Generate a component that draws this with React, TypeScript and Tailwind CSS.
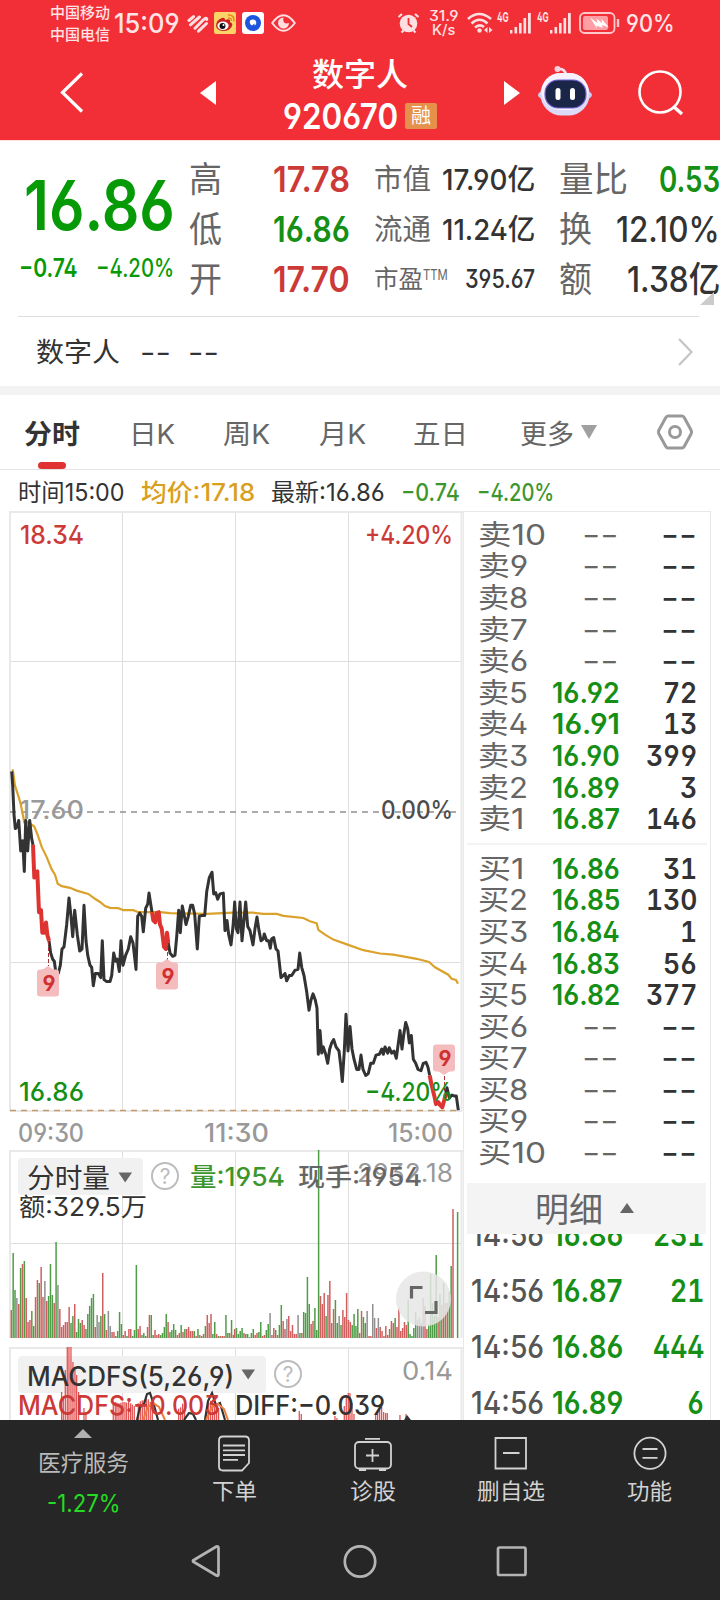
import { useLayoutEffect, useRef, useState, type ReactNode } from "react";

interface TProps {
  w: number;
  className?: string;
  children: ReactNode;
}

// Text squeezed or stretched horizontally so it fills exactly w pixels
function T({ w, className = "", children }: TProps) {
  const ref = useRef<HTMLSpanElement>(null);
  const [scale, setScale] = useState(1);
  useLayoutEffect(() => {
    if (ref.current) setScale(w / ref.current.offsetWidth);
  }, [w]);
  return (
    <span className={`block shrink-0 whitespace-nowrap leading-none ${className}`} style={{ width: w }}>
      <span ref={ref} className="inline-block origin-left" style={{ transform: `scaleX(${scale})` }}>
        {children}
      </span>
    </span>
  );
}

function Signal() {
  return (
    <svg className="ml-[1px] h-[21px] w-[21px] shrink-0" viewBox="0 0 21 21" fill="#ffdfe1">
      <rect x="0" y="17" width="2.4" height="3.5" />
      <rect x="4.5" y="14" width="2.6" height="6.5" />
      <rect x="9" y="10" width="2.6" height="10.5" />
      <rect x="13.5" y="5" width="2.6" height="15.5" />
      <rect x="18" y="0" width="2.8" height="20.5" />
    </svg>
  );
}

function StatusBar() {
  return (
    <div className="flex h-[46px] items-center pl-[50px] font-medium text-[#ffe3e5]">
      <div className="flex flex-col gap-[7px]">
        <T w={60} className="text-[15px]">中国移动</T>
        <T w={60} className="text-[15px]">中国电信</T>
      </div>
      <T w={66} className="ml-[4px] text-[27px]">15:09</T>
      <svg className="ml-[6px] h-[19px] w-[23px]" viewBox="0 0 23 19" fill="none" stroke="#ffdfe1" strokeWidth="3" strokeLinecap="round">
        <path d="M3 6.500 L7.500 2.600 M4.500 10.800 L13.500 3 M9 14.200 L17.200 6 Q20.500 2.800 20.800 5.500 M12.500 17.200 L20.500 9.500" />
      </svg>
      <svg className="ml-[5px] h-[22px] w-[22px]" viewBox="0 0 22 22">
        <rect width="22" height="22" rx="2" fill="#fbd468" />
        <path d="M2 14 Q2 8 8 6 Q11 5 11 8 Q17 6 16 10 Q19 11 18 14 Q16 19 9 19 Q3 18.500 2 14" fill="#c9201f" />
        <ellipse cx="9" cy="13.800" rx="5.600" ry="4.200" fill="#fff" />
        <circle cx="8.500" cy="14" r="3" fill="#111" />
        <circle cx="9.500" cy="13" r="1" fill="#fff" />
        <path d="M14 6 Q17.500 5.500 17.500 9 M14 3 Q20.500 2.500 20 9.500" fill="none" stroke="#e88a1c" strokeWidth="1.500" />
      </svg>
      <svg className="ml-[6px] h-[22px] w-[22px]" viewBox="0 0 22 22">
        <rect width="22" height="22" rx="3" fill="#fff" />
        <circle cx="11" cy="11" r="8" fill="#1d55dd" />
        <path d="M8 8.500 Q11 6.500 13.500 8.500 Q15.500 12 12.500 13.500 V11.500 L10 13.500 Q7 12 8 8.500" fill="#fff" />
      </svg>
      <svg className="ml-[7px] h-[18px] w-[25px]" viewBox="0 0 25 18" fill="none" stroke="#ffdfe1" strokeWidth="2">
        <path d="M1.200 9 Q12.500 -6.500 23.800 9 Q12.500 24.500 1.200 9 Z" />
        <path d="M12.500 3.500 A5.500 5.500 0 1 0 18 9 Q15 10 13 8.500 Q11.500 6.500 12.500 3.500" fill="#ffdfe1" stroke="none" />
      </svg>
      <svg className="ml-[101px] h-[22px] w-[23px]" viewBox="0 0 23 22">
        <circle cx="11.500" cy="11.500" r="8.800" fill="#ffdfe1" />
        <path d="M1.500 5 L5 2 M21.500 5 L18 2 M4.500 20.500 L6.500 18.500 M18.500 20.500 L16.500 18.500" stroke="#ffdfe1" strokeWidth="2.200" />
        <path d="M11.500 6 V12 L15 15" fill="none" stroke="#f22f37" strokeWidth="1.800" />
      </svg>
      <div className="ml-[9px] flex flex-col items-center">
        <T w={29} className="text-[14px]">31.9</T>
        <T w={23} className="text-[14px]">K/s</T>
      </div>
      <svg className="ml-[9px] h-[22px] w-[26px]" viewBox="0 0 26 22" fill="none" stroke="#ffdfe1" strokeWidth="2.600">
        <path d="M1 7 Q12 -3 24 7 M4.500 11.500 Q12.500 4 20.500 11.500 M8 15.500 Q12.500 11.500 17 15" />
        <circle cx="12.500" cy="18.500" r="2.200" fill="#ffdfe1" stroke="none" />
        <path d="M20.500 15 V21 L17 18 Z M22 15 V21 L25.500 18 Z" fill="#ffdfe1" stroke="none" />
      </svg>
      <T w={12} className="ml-[4px] mb-[12px] text-[13px] font-bold">4G</T>
      <Signal />
      <T w={12} className="ml-[6px] mb-[12px] text-[13px] font-bold">4G</T>
      <Signal />
      <svg className="ml-[8px] h-[22px] w-[41px]" viewBox="0 0 41 22">
        <rect x="1" y="1" width="34.500" height="20" rx="4.500" fill="none" stroke="#ffc9cc" strokeWidth="1.800" />
        <rect x="4" y="4" width="25" height="14" rx="2" fill="#ff9ea4" />
        <path d="M11 5.500 L18.500 11 L17.500 6.500 L23 11 L22.500 7 L30 15.500 L23 13 L23.500 16 L17.500 13.500 L18 16.500 Z" fill="#fff" />
        <path d="M39 7 V15" stroke="#ffc9cc" strokeWidth="2.400" />
      </svg>
      <T w={49} className="ml-[6px] mt-[2px] text-[24px]">90%</T>
    </div>
  );
}

function Header() {
  return (
    <div className="flex h-[94px] items-center pl-[60px] text-white">
      <svg className="h-[42px] w-[25px]" viewBox="0 0 25 42" fill="none" stroke="#fff" strokeWidth="3.200">
        <path d="M22 1.500 L2.500 20.500 L22 39.500" />
      </svg>
      <svg className="ml-[115px] h-[24px] w-[16px]" viewBox="0 0 16 24" fill="#fff">
        <path d="M0 12 L16 0 V24 Z" />
      </svg>
      <div className="ml-[66px] flex w-[158px] flex-col pt-[7px]">
        <T w={96} className="ml-[30px] text-[32px] font-medium">数字人</T>
        <div className="mt-[7px] flex h-[36px] items-center">
          <T w={115} className="ml-[1px] text-[36px] font-semibold">920670</T>
          <div className="ml-[7px] flex h-[26px] w-[32px] items-center justify-center rounded-[2px] bg-[#e6914b] text-[20px] leading-none">融</div>
        </div>
      </div>
      <svg className="ml-[64px] h-[24px] w-[16px]" viewBox="0 0 16 24" fill="#fff">
        <path d="M16 12 L0 0 V24 Z" />
      </svg>
      <svg className="ml-[18px] mb-[6px] h-[51px] w-[54px]" viewBox="0 0 54 51">
        <ellipse cx="27" cy="30" rx="27" ry="8" fill="#c9cdf5" />
        <path d="M19 4 Q27 3 28 10" fill="none" stroke="#f3dfee" strokeWidth="2.500" />
        <circle cx="19.500" cy="4" r="3" fill="#f6d3dc" />
        <rect x="2.500" y="8" width="49" height="42.500" rx="21" fill="#dcdaf8" />
        <rect x="3.500" y="8" width="47" height="37" rx="18.500" fill="#f6f1fa" />
        <rect x="7" y="15" width="41" height="28" rx="13" fill="#1b2547" stroke="#7263d6" strokeWidth="1.200" />
        <rect x="17.500" y="23" width="5" height="12" rx="2.500" fill="#fff" />
        <rect x="32" y="23" width="5" height="12" rx="2.500" fill="#fff" />
      </svg>
      <svg className="ml-[46px] h-[46px] w-[46px]" viewBox="0 0 46 46" fill="none" stroke="#fff" strokeWidth="2.600">
        <circle cx="22" cy="22" r="20.500" />
        <path d="M36 37 L44 44" strokeWidth="3.400" />
      </svg>
    </div>
  );
}

function Quote() {
  return (
    <div className="relative flex h-[176px] border-t border-[#ffdcde]">
      <div className="flex w-[189px] flex-col pt-[30px] text-[#079a07]">
        <T w={151} className="ml-[24px] text-[69px] font-semibold">16.86</T>
        <div className="mt-[16px] flex">
          <T w={59} className="ml-[19px] text-[25px] font-semibold">−0.74</T>
          <T w={78} className="ml-[18px] text-[25px] font-medium">−4.20%</T>
        </div>
      </div>
      <div className="flex w-[186px] flex-col pt-[13px] text-[35px] text-[#666] [&>div]:flex [&>div]:h-[50px] [&>div]:items-center">
        <div><T w={33}>高</T><T w={77} className="ml-[51px] font-semibold text-[#cc3a38]">17.78</T></div>
        <div><T w={33}>低</T><T w={77} className="ml-[51px] font-semibold text-[#158f15]">16.86</T></div>
        <div><T w={33}>开</T><T w={77} className="ml-[51px] font-semibold text-[#cc3a38]">17.70</T></div>
      </div>
      <div className="flex w-[185px] flex-col pt-[13px] text-[29px] text-[#666] [&>div]:flex [&>div]:h-[50px] [&>div]:items-center">
        <div><T w={57}>市值</T><T w={93} className="ml-[11px] font-medium text-[#333]">17.90亿</T></div>
        <div><T w={57}>流通</T><T w={93} className="ml-[11px] font-medium text-[#333]">11.24亿</T></div>
        <div>
          <T w={49} className="text-[25px]">市盈</T>
          <T w={25} className="mb-[9px] text-[14px]">TTM</T>
          <T w={70} className="ml-[17px] text-[25px] font-medium text-[#333]">395.67</T>
        </div>
      </div>
      <div className="flex flex-col pt-[13px] text-[35px] text-[#666] [&>div]:flex [&>div]:h-[50px] [&>div]:items-center">
        <div><T w={69}>量比</T><T w={61} className="ml-[31px] font-semibold text-[#158f15]">0.53</T></div>
        <div><T w={33}>换</T><T w={104} className="ml-[24px] font-medium text-[#333]">12.10%</T></div>
        <div><T w={33}>额</T><T w={93} className="ml-[35px] font-medium text-[#333]">1.38亿</T></div>
      </div>
      <svg className="absolute left-[700px] top-[151px] h-[13px] w-[14px]" viewBox="0 0 14 13" fill="#ccc">
        <path d="M14 0 V13 H0 Z" />
      </svg>
    </div>
  );
}

function Tabs() {
  return (
    <div className="flex h-[75px] items-center border-b border-[#e4e4e4] pl-[24px] pt-[4px] text-[27px] text-[#666]">
      <div className="relative">
        <T w={56} className="font-bold text-[#333]">分时</T>
        <div className="absolute left-[14px] top-[41px] h-[7px] w-[28px] rounded-full bg-[#e03232]" />
      </div>
      <T w={46} className="ml-[49px]">日K</T>
      <T w={47} className="ml-[48px]">周K</T>
      <T w={47} className="ml-[49px]">月K</T>
      <T w={55} className="ml-[47px]">五日</T>
      <T w={54} className="ml-[52px]">更多</T>
      <svg className="ml-[7px] mb-[4px] h-[14px] w-[16px]" viewBox="0 0 16 14" fill="#a0a0a0">
        <path d="M0 0 H16 L8 14 Z" />
      </svg>
      <svg className="ml-[60px] mb-[4px] h-[36px] w-[36px]" viewBox="0 0 36 36" fill="none" stroke="#999" strokeWidth="3">
        <path d="M11 2 H25 Q26.500 2 27.500 4 L34 16 Q35 18 34 20 L27.500 32 Q26.500 34 25 34 H11 Q9.500 34 8.500 32 L2 20 Q1 18 2 16 L8.500 4 Q9.500 2 11 2 Z" />
        <circle cx="18" cy="18" r="5.500" />
      </svg>
    </div>
  );
}

function Summary() {
  return (
    <div className="flex h-[41px] items-center pl-[18px] pt-[5px] text-[24px] text-[#333]">
      <T w={107}>时间15:00</T>
      <T w={114} className="ml-[16px] font-medium text-[#d9a020]">均价:17.18</T>
      <T w={114} className="ml-[16px]">最新:16.86</T>
      <T w={59} className="ml-[16px] font-medium text-[#3c962c]">−0.74</T>
      <T w={77} className="ml-[17px] font-medium text-[#3c962c]">−4.20%</T>
    </div>
  );
}

// Samples are stored on a finer grid than the screen: 3 steps per px across, 2.45 down
const toPoints = (raw: string) =>
  raw
    .split(" ")
    .map((pair) => {
      const [x, y] = pair.split(",").map(Number);
      return `${(x / 3).toFixed(1)},${(y / 2.45 - 11).toFixed(1)}`;
    })
    .join(" ");

const PRICE = [
  "35,665 38,700 42,770 46,805 52,800 56,785 62,860 68,835 73,910 77,785 83,860 89,785 95,830 99,845",
  "147,1080 152,1110 158,1125 163,1130 168,1160 175,1160 181,1140 186,1100 192,1095 200,1040 207,975 213,1020 218,1070 224,1005 232,1065 239,1105 246,1100 252,993 258,1080 263,1115 270,1140 275,1145 280,1190 286,1160 295,1160 302,1170 307,1080 312,1175 320,1180 330,1180 335,1165 341,1110 347,1130 352,1125 358,1155 363,1080 369,1140 377,1115 385,1100 392,1070 399,1085 408,1150 413,1020 419,1012 425,1020 430,1058 437,1000 443,990 447,963 452,990 456,1010",
  "505,1085 510,1110 518,1118 525,1115 530,1070 536,1005 541,1060 547,995 552,1015 558,1040 565,1020 572,993 578,993 584,1015 592,1100 598,1020 606,1018 614,1018 620,960 628,925 636,912 641,965 647,962 653,978 660,965 670,963 675,1055 681,1030 686,1065 693,1090 699,1045 704,985 709,1050 714,1060 720,985 726,1080 737,985 743,1045 750,1055 759,1090 765,1050 771,1022 777,1055 783,1080 790,1075 793,1063 800,1080 806,1080 811,1098 815,1075 821,1072 828,1100 834,1105 843,1170 850,1165 855,1160 860,1178 868,1165 875,1165 885,1152 894,1150 899,1110 905,1145 912,1165 920,1205 927,1250 933,1225 939,1210 946,1225 951,1245 955,1358 960,1300 965,1355 970,1340 977,1358 983,1380 989,1345 995,1330 1001,1322 1008,1340 1017,1350 1022,1385 1027,1425 1033,1350 1038,1260 1044,1350 1050,1290 1056,1345 1062,1370 1070,1395 1077,1395 1083,1360 1089,1395 1097,1410 1105,1405 1112,1380 1120,1380 1128,1360 1138,1358 1145,1345 1150,1358 1155,1340 1163,1355 1168,1342 1175,1355 1182,1350 1189,1368 1200,1300 1206,1345 1211,1310 1217,1280 1223,1295 1228,1330 1234,1312 1240,1370 1247,1380 1254,1395 1263,1398 1270,1380 1278,1378 1284,1390 1289,1410",
  "1337,1455 1341,1440 1348,1465 1356,1458 1362,1460 1369,1460 1375,1495",
];

const PRICE_RED = [
  "99,845 103,925 108,912 112,910 117,1010 123,1005 127,1060 133,1060 138,1035 142,1065 147,1080",
  "456,1010 460,1030 466,1035 470,1012 476,1010 480,1040 485,1050 492,1095 498,1100 501,1060 505,1085",
  "1289,1410 1294,1430 1303,1460 1308,1480 1315,1475 1320,1482 1327,1488 1333,1470 1337,1455",
];

const AVERAGE =
  "38,660 45,700 55,725 62,745 73,790 85,790 103,800 115,825 125,850 140,875 155,905 165,918 173,940 185,946 210,950 230,957 265,965 285,977 300,985 315,995 330,999 355,1000 370,1005 400,1005 415,1010 480,1010 510,1012 620,1014 700,1011 760,1011 790,1014 830,1014 850,1019 910,1024 930,1032 950,1037 955,1053 975,1065 1000,1077 1045,1090 1090,1103 1140,1111 1180,1114 1250,1124 1287,1132 1305,1145 1345,1163 1355,1173 1368,1176 1374,1185";

interface LabelProps {
  x: number;
  y: number;
  w: number;
  fill: string;
  size?: number;
  weight?: number;
  children: string;
}

// y is the vertical centre of the digits
function Label({ x, y, w, fill, size = 25, weight = 500, children }: LabelProps) {
  return (
    <text x={x} y={y + size * 0.36} fill={fill} fontSize={size} fontWeight={weight} textLength={w} lengthAdjust="spacingAndGlyphs">
      {children}
    </text>
  );
}

function Nine({ x, y, down = false }: { x: number; y: number; down?: boolean }) {
  return (
    <g>
      <rect x={x - 11} y={y - 13.5} width="22" height="27" rx="3" fill="#f5bcbe" />
      <path d={down ? `M${x - 6} ${y + 13} L${x} ${y + 17} L${x + 6} ${y + 13}` : `M${x - 6} ${y - 13} L${x} ${y - 17} L${x + 6} ${y - 13}`} fill="#f5bcbe" />
      <Label x={x - 5.5} y={y} w={13} size={22} weight={700} fill="#d03030">9</Label>
    </g>
  );
}

function PriceChart() {
  return (
    <svg className="h-[639px] w-[463px]" viewBox="0 0 463 639" fill="none">
      <g stroke="#dedede" strokeWidth="1">
        <path d="M10 150.500 H462 M10 451.500 H462 M122.500 1 V600 M235.500 1 V600 M348.500 1 V600" />
        <path d="M9 1 H463 M10 1 V600 M461.500 1 V600 M10 600 H462" stroke="#e9e9e9" strokeWidth="2" />
      </g>
      <Label x={19} y={299} w={65} fill="#999">17.60</Label>
      <path d="M10 301 H460" stroke="#909090" strokeWidth="1.500" strokeDasharray="6 5" />
      <polyline points={toPoints(AVERAGE)} stroke="#dba22b" strokeWidth="2.200" />
      {PRICE.map((p) => (
        <polyline key={p} points={toPoints(p)} stroke="#333" strokeWidth="3" strokeLinejoin="round" />
      ))}
      {PRICE_RED.map((p) => (
        <polyline key={p} points={toPoints(p)} stroke="#dd3432" strokeWidth="4" strokeLinejoin="round" />
      ))}
      <path d="M10 599.500 H460" stroke="#c39a6b" strokeWidth="1.600" strokeDasharray="6 5" />
      <path d="M48.500 430 V455 M167.500 435 V450 M444.500 565 V580" stroke="#a33" strokeWidth="1" strokeDasharray="4 2" />
      <Nine x={48} y={472} />
      <Nine x={167} y={465} />
      <Nine x={444} y={547} down />
      <Label x={20} y={23.5} w={64} fill="#cc3a38">18.34</Label>
      <Label x={365} y={23.5} w={88} fill="#cc3a38">+4.20%</Label>
      <Label x={381} y={299} w={72} fill="#4d4d4d">0.00%</Label>
      <Label x={19} y={580.5} w={65} fill="#158f15">16.86</Label>
      <Label x={365} y={580.5} w={88} fill="#158f15">−4.20%</Label>
      <Label x={18} y={621.5} w={66} fill="#999">09:30</Label>
      <Label x={204} y={621.5} w={65} fill="#999">11:30</Label>
      <Label x={388} y={621.5} w={65} fill="#999">15:00</Label>
    </svg>
  );
}

// r = up, g = down, k = unchanged, followed by the bar height; from is in thirds of a px
const VOLUME = [
  {
    from: 34,
    bars: "r28 g85 g48 k40 r34 g70 r74 g77 r40 r16 r18 g27 g12 r41 r58 g55 r71 r41 k57 r37 g42 g74 g43 r35 g96 k53 r29 r11 r13 r16 r16 r31 g15 g22 r34 g6 g19 g15 r18 r13 g9 g24 g32 g40 g44 r11 k23 k16 g22 r65 g24 r8 k27 k12 r6 r6 g2 g7 g26 g14 r3 r7 g2 r9 r9 g2 g8 g73 r9 r12 g3 g5 g2 r11 r23 g23 g3 r8 r3 r4 g3 g5 g11 g24 r16 g6 g8 g14 g8 r3 r5 g13 r6 g9 r9 r11 r7 r7 g7 r2 g9 r3 g2 r4 g12 r23 r15 r24 g4 g16 r4 g2 r2 r2 r2 g23 g5 r5 g18 r3",
  },
  {
    from: 704,
    bars: "r9 g10 g4 g7 g10 r5 g4 g4 r1 g5 g9 r3 r5 g6 g16 r2 r3 g8 g14 k25 r3 r10 g8 r3 g13 g33 r17 r9 k19 r22 r7 r13 r4 r4 k23 g5 r5 g26 g25 g61 g34 r14 r17 g30 g8 g189 r42 r34 r45 g22 r43 r57 r15 r29 g38 g15 k22 g13 r28 r21 r45 r18 r16 g13 g24 g12 g29 r5 r27 g21 g15 k27 r2 r2 k34 k20 r10 k20 r11 r7 r2 r12 r3 g9 r17 r15 g20 r11 r30 r7 r10 r16 r13 g38 g4 g2 g10 g26 k18 k20 k15 k40 r32 r9 g14 g64 g35 g22 g83 r21 g44 r33 g55 r35 r35 g46 g72 r129",
  },
  { from: 1373, bars: "g126" },
];

const BAR_FILL: Record<string, string> = { r: "#d06060", g: "#4f9d47", k: "#8f8f8f" };

function Help({ cx, cy }: { cx: number; cy: number }) {
  return (
    <g>
      <circle cx={cx} cy={cy} r="13" stroke="#bdbdbd" strokeWidth="2" />
      <text x={cx} y={cy + 7.5} textAnchor="middle" fontSize="21" fill="#bdbdbd">?</text>
    </g>
  );
}

function VolumeChart() {
  return (
    <svg className="h-[197px] w-[463px]" viewBox="0 0 463 197" fill="none">
      <path d="M10 93.500 H462 M122.500 1 V188 M235.500 1 V188 M348.500 1 V188" stroke="#dedede" />
      <path d="M9 1 H463 M10 0 V188 M461.500 0 V188" stroke="#e9e9e9" strokeWidth="2" />
      {VOLUME.map(({ from, bars }) =>
        bars.split(" ").map((bar, i) => {
          const height = Number(bar.slice(1));
          return <rect key={`${from}-${i}`} x={(from + i * 5.6) / 3 - 0.8} y={188 - height} width="1.500" height={height} fill={BAR_FILL[bar[0]]} />;
        })
      )}
      <rect x="18" y="8" width="125" height="37" rx="4" fill="#f1f1f1" />
      <Label x={27} y={28} w={83} size={27} weight={400} fill="#333">分时量</Label>
      <path d="M118.500 22.500 H132 L125.200 32.500 Z" fill="#666" />
      <Help cx={165} cy={26} />
      <Label x={357} y={22.5} w={96} fill="#999" weight={400}>2932.18</Label>
      <Label x={190} y={27} w={95} fill="#3c962c">量:1954</Label>
      <Label x={298} y={27} w={124} fill="#666">现手:1954</Label>
      <Label x={19} y={57} w={128} fill="#333" weight={400}>额:329.5万</Label>
      <circle cx="423.500" cy="149" r="27.500" fill="#e6e6e6" fillOpacity=".85" />
      <path d="M411.500 148.500 V137.500 H422.500 M425 162.500 H436 V151" stroke="#666" strokeWidth="3.200" />
    </svg>
  );
}

const MACD_BARS = [
  [185, 28], [190, 23], [196, 50], [202, 73], [207, 91], [213, 73], [219, 58], [225, 50], [230, 45], [236, 28], [252, 12], [258, 6],
  [340, 28], [346, 30], [351, 28], [357, 26], [363, 28], [369, 30], [375, 30], [380, 28], [386, 30], [392, 26], [397, 22], [403, 18],
  [415, 26], [421, 32], [427, 35], [433, 36], [439, 40], [445, 38], [451, 30], [457, 15],
  [536, 10], [542, 14], [548, 25], [554, 12], [620, 18], [626, 28], [632, 34], [638, 32], [644, 26], [650, 18], [656, 12],
  [898, 9], [904, 6], [1005, 4], [1011, 2], [1033, 14], [1039, 24], [1045, 27], [1050, 27], [1056, 17], [1062, 6],
  [1127, 5], [1133, 8], [1139, 12], [1145, 13], [1151, 8], [1157, 7], [1162, 7], [1200, 5], [1218, 6],
];

function MacdChart() {
  return (
    <svg className="h-[73px] w-[463px]" viewBox="0 0 463 73" fill="none">
      <path d="M122.500 1 V73 M235.500 1 V73 M348.500 1 V73" stroke="#dedede" />
      <path d="M9 1 H463 M10 1 V73 M461.500 1 V73" stroke="#e9e9e9" strokeWidth="2" />
      <rect x="18" y="9" width="248" height="37" rx="4" fill="#f1f1f1" />
      {MACD_BARS.map(([x, h]) => {
        const height = x < 300 ? Math.min(h, 73) : x < 898 ? h / 3 + 8 : h;
        return <rect key={x} x={x / 3 - 0.7} y={73 - height} width="1.300" height={height} fill="#e35454" />;
      })}
      <path d="M137 73 L140 60 L144 57 L147 47 L150 46 L154 58 L158 73 M184 73 L189 66 L193 67 L196 73 M205 73 L208 54 L212 46 L216 58 L220 56 L225 73" stroke="#333" strokeWidth="2.200" />
      <path d="M404 73 L407 68 L411 73 Z" fill="#333" />
      <path d="M143 73 L148 60 L153 56 L159 60 L165 73 M206 73 L212 60 L218 57 L224 62 L228 73" stroke="#f07b3c" strokeWidth="2" />
      <Label x={27} y={29.5} w={207} size={27} weight={500} fill="#333">MACDFS(5,26,9)</Label>
      <path d="M241.500 22.500 H255 L248.200 32.500 Z" fill="#666" />
      <Help cx={288} cy={27} />
      <Label x={402} y={23.5} w={51} size={26} weight={400} fill="#999">0.14</Label>
      <Label x={18} y={58} w={202} size={27} weight={500} fill="#cc3a38">MACDFS:−0.003</Label>
      <Label x={235} y={58} w={150} size={27} weight={500} fill="#333">DIFF:−0.039</Label>
    </svg>
  );
}

interface Level {
  label: string;
  price?: string;
  volume?: string;
}

const ASKS: Level[] = [
  { label: "卖10" },
  { label: "卖9" },
  { label: "卖8" },
  { label: "卖7" },
  { label: "卖6" },
  { label: "卖5", price: "16.92", volume: "72" },
  { label: "卖4", price: "16.91", volume: "13" },
  { label: "卖3", price: "16.90", volume: "399" },
  { label: "卖2", price: "16.89", volume: "3" },
  { label: "卖1", price: "16.87", volume: "146" },
];

const BIDS: Level[] = [
  { label: "买1", price: "16.86", volume: "31" },
  { label: "买2", price: "16.85", volume: "130" },
  { label: "买3", price: "16.84", volume: "1" },
  { label: "买4", price: "16.83", volume: "56" },
  { label: "买5", price: "16.82", volume: "377" },
  { label: "买6" },
  { label: "买7" },
  { label: "买8" },
  { label: "买9" },
  { label: "买10" },
];

const TRADES = [
  { price: "16.86", volume: "231" },
  { price: "16.87", volume: "21" },
  { price: "16.86", volume: "444" },
  { price: "16.89", volume: "6" },
];

function LevelRow({ label, price, volume }: Level) {
  return (
    <div className="flex h-[31.6px] items-center pl-[14px] pr-[13px] text-[28px] text-[#666]">
      <T w={label.length > 2 ? 68 : label.endsWith("1") ? 46 : 50}>{label}</T>
      <div className="ml-auto flex w-[70px] justify-end">
        {price ? <T w={68} className="font-semibold text-[#158f15]">{price}</T> : <T w={37} className="mr-[1px]">--</T>}
      </div>
      <div className="flex w-[77px] justify-end">
        {volume ? (
          <T w={volume.length * 17} className="font-semibold tabular-nums text-[#333]">{volume}</T>
        ) : (
          <T w={36} className="font-medium text-[#333]">--</T>
        )}
      </div>
    </div>
  );
}

function OrderBook() {
  return (
    <div className="flex h-[909px] w-[248px] flex-col overflow-hidden border-x border-t border-[#e8e8e8] bg-white">
      <div className="pt-[7px]">
        {ASKS.map((level) => <LevelRow key={level.label} {...level} />)}
      </div>
      <div className="mx-[3px] mt-[8px] h-[2px] shrink-0 bg-[#f3f3f3]" />
      <div className="mt-[8px]">
        {BIDS.map((level) => <LevelRow key={level.label} {...level} />)}
      </div>
      <div className="ml-[3px] mr-[4px] mt-auto flex h-[51px] shrink-0 items-center bg-[#f4f4f4] pl-[68px] pt-[2px] text-[34px] text-[#666]">
        <T w={68}>明细</T>
        <svg className="ml-[17px] mb-[4px] h-[10px] w-[14px]" viewBox="0 0 14 10" fill="#666">
          <path d="M0 10 L7 0 L14 10 Z" />
        </svg>
      </div>
      <div className="h-[186px] shrink-0 overflow-hidden">
        <div className="mt-[-28px]">
          {TRADES.map(({ price, volume }, i) => (
            <div key={i} className="flex h-[56px] items-center pl-[7px] pr-[6px] text-[31px] font-medium">
              <T w={73} className="text-[#555]">14:56</T>
              <T w={71} className="ml-[8px] font-semibold text-[#158f15]">{price}</T>
              <T w={volume.length * 17.1} className="ml-auto font-semibold tabular-nums text-[#158f15]">{volume}</T>
            </div>
          ))}
        </div>
      </div>
    </div>
  );
}

function Toolbar() {
  return (
    <div className="flex h-[102px] text-[#d2d2d2]">
      <div className="flex w-[166px] flex-col items-center text-[#b9b9b9]">
        <svg className="mt-[9px] h-[9px] w-[18px]" viewBox="0 0 18 9" fill="#b0b0b0">
          <path d="M0 9 L9 0 L18 9 Z" />
        </svg>
        <T w={91} className="mt-[14px] text-[23px]">医疗服务</T>
        <T w={74} className="mt-[17px] ml-[1px] text-[24px] text-[#22dd22]">-1.27%</T>
      </div>
      <div className="mr-[1px] ml-[-1px] grid flex-1 grid-cols-4 text-[22px] [&>div]:flex [&>div]:flex-col [&>div]:items-center [&_svg]:mb-[8px] [&_svg]:mt-[14px] [&_svg]:h-[38px] [&_svg]:w-[40px]">
        <div>
          <svg viewBox="0 0 40 38" fill="none" stroke="currentColor" strokeWidth="1.800">
            <path d="M9 2.500 H31 Q35 2.500 35 6.500 V29 L28 36.500 H9 Q5 36.500 5 32.500 V6.500 Q5 2.500 9 2.500 Z M9 11.500 H31 M9 16.300 H31 M9 21 H31 M9 25.800 H24" />
          </svg>
          <T w={45}>下单</T>
        </div>
        <div>
          <svg viewBox="0 0 40 38" fill="none" stroke="currentColor" strokeWidth="1.800">
            <rect x="2" y="8" width="36" height="26.500" rx="4" />
            <path d="M12 4.800 H27 M19.500 15 V28 M13 21.500 H26 M6 36 H13 M26 36 H33" />
          </svg>
          <T w={46}>诊股</T>
        </div>
        <div>
          <svg viewBox="0 0 40 38" fill="none" stroke="currentColor" strokeWidth="1.800">
            <path d="M4.500 4 H35 V34.500 H4.500 Z M12 19 H28.500" />
          </svg>
          <T w={68}>删自选</T>
        </div>
        <div>
          <svg viewBox="0 0 40 38" fill="none" stroke="currentColor" strokeWidth="1.800">
            <circle cx="20" cy="19.300" r="15.600" />
            <path d="M12.500 15 H27.500 M12.500 23.800 H27.500" />
          </svg>
          <T w={45}>功能</T>
        </div>
      </div>
    </div>
  );
}

function SystemNav() {
  return (
    <div className="flex h-[78px] items-center pl-[190px] pt-[1px]">
      <svg className="h-[34px] w-[340px]" viewBox="0 0 340 34" fill="none" stroke="#b4b4b4" strokeWidth="2.700" strokeLinejoin="round">
        <path d="M3 15.500 L26.500 1.500 Q28.500 1 28.500 3 V29 Q28.500 31.500 26.500 30.500 L3 16.500 Z" />
        <circle cx="170" cy="16.500" r="15.200" />
        <rect x="308" y="2.500" width="27.500" height="27.500" rx="1.500" />
      </svg>
    </div>
  );
}

export default function App() {
  return (
    <div className="h-[1600px] w-[720px] overflow-hidden bg-white font-[Inter,'Noto_Sans_CJK_SC',sans-serif] [font-feature-settings:'ss01','cv03','cv04']">
      <div className="h-[140px] bg-[#f22f37]">
        <StatusBar />
        <Header />
      </div>
      <Quote />
      <div className="ml-[18px] mr-[21px] h-px bg-[#dedede]" />
      <div className="flex h-[69px] items-center pl-[36px] pt-[2px] text-[27px] text-[#333]">
        <T w={84}>数字人</T>
        <T w={31} className="ml-[20px]">--</T>
        <T w={31} className="ml-[17px]">--</T>
        <svg className="ml-[459px] mb-[2px] h-[28px] w-[15px]" viewBox="0 0 15 28" fill="none" stroke="#c4c4c4" strokeWidth="2.200">
          <path d="M1 1 L13.500 14 L1 27" />
        </svg>
      </div>
      <div className="h-[9px] bg-[#f3f3f3]" />
      <Tabs />
      <Summary />
      <div className="flex h-[909px] overflow-hidden">
        <div className="flex flex-col">
          <PriceChart />
          <VolumeChart />
          <MacdChart />
        </div>
        <OrderBook />
      </div>
      <div className="h-[180px] bg-[#262626]">
        <Toolbar />
        <SystemNav />
      </div>
    </div>
  );
}
